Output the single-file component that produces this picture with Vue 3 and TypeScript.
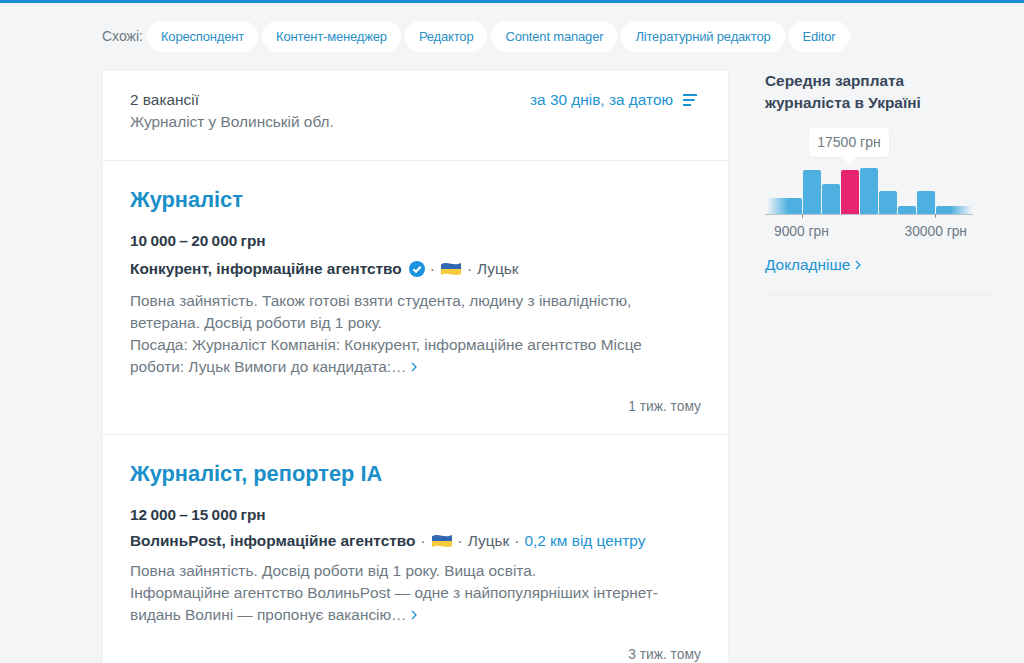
<script setup lang="ts">
interface Job {
  title: string
  salary: string
  company: string
  verified: boolean
  distance?: string
  lines: string[]
  age: string
}

const chips: string[] = ['Кореспондент', 'Контент-менеджер', 'Редактор', 'Content manager', 'Літературний редактор', 'Editor']

const jobs: Job[] = [
  {
    title: 'Журналіст',
    salary: '10 000 – 20 000 грн',
    company: 'Конкурент, інформаційне агентство',
    verified: true,
    lines: [
      'Повна зайнятість. Також готові взяти студента, людину з інвалідністю,',
      'ветерана. Досвід роботи від 1 року.',
      'Посада: Журналіст Компанія: Конкурент, інформаційне агентство Місце',
      'роботи: Луцьк Вимоги до кандидата:…'
    ],
    age: '1 тиж. тому'
  },
  {
    title: 'Журналіст, репортер ІА',
    salary: '12 000 – 15 000 грн',
    company: 'ВолиньPost, інформаційне агентство',
    verified: false,
    distance: '0,2 км від центру',
    lines: [
      'Повна зайнятість. Досвід роботи від 1 року. Вища освіта.',
      'Інформаційне агентство ВолиньPost — одне з найпопулярніших інтернет-',
      'видань Волині — пропонує вакансію…'
    ],
    age: '3 тиж. тому'
  }
]

const bars = [
  { w: 35, h: 16, kind: 'fade-left' },
  { w: 18, h: 44, kind: '' },
  { w: 18, h: 30, kind: '' },
  { w: 18, h: 44, kind: 'hot' },
  { w: 18, h: 46, kind: '' },
  { w: 18, h: 23, kind: '' },
  { w: 18, h: 8, kind: '' },
  { w: 18, h: 23, kind: '' },
  { w: 36, h: 8, kind: 'fade-right' }
]
</script>

<template>
  <div class="page">
    <div class="similar">
      <span class="similar-label">Схожі:</span>
      <a v-for="chip in chips" :key="chip" class="chip">{{ chip }}</a>
    </div>
    <div class="columns">
      <main class="card">
        <header class="head">
          <div>
            <div class="count">2 вакансії</div>
            <div class="query">Журналіст у Волинській обл.</div>
          </div>
          <a class="sort">
            за 30 днів, за датою
            <svg width="16" height="12" viewBox="0 0 16 12" class="sort-icon">
              <path d="M1 1h14M1 6h11.5M1 11h8" fill="none" stroke="#1d94d2" stroke-width="2" />
            </svg>
          </a>
        </header>
        <article v-for="job in jobs" :key="job.title" class="job">
          <h2 class="title">{{ job.title }}</h2>
          <div class="salary">{{ job.salary }}</div>
          <div class="meta" :class="{ tall: job.verified }">
            <b class="company">{{ job.company }}</b>
            <svg v-if="job.verified" class="check" width="16" height="16" viewBox="0 0 16 16">
              <circle cx="8" cy="8" r="8" fill="#1d94e2" />
              <path d="M4.4 8.2l2.6 2.5 4.6-5" fill="none" stroke="#fff" stroke-width="2.2" />
            </svg>
            <span class="dot">·</span>
            <svg class="flag" width="20" height="14" viewBox="0 0 20 14">
              <path d="M0 2.5C3 .5 6 1 10 1.8S17 2.5 20 1v6H0z" fill="#2f67b2" />
              <path d="M0 7h20v5c-3 1.4-6 1-10 .2S3 11.5 0 13z" fill="#f4cc3c" />
            </svg>
            <span class="dot">·</span>
            <span class="city">Луцьк</span>
            <template v-if="job.distance">
              <span class="dot">·</span>
              <a class="distance">{{ job.distance }}</a>
            </template>
          </div>
          <p class="desc">
            <span v-for="(line, i) in job.lines" :key="i" class="line">{{ line }}<svg v-if="i === job.lines.length - 1" class="more" width="6" height="10" viewBox="0 0 6 10"><path d="M1 1l4 4-4 4" fill="none" stroke="#1d94d2" stroke-width="1.3" /></svg></span>
          </p>
          <div class="age">{{ job.age }}</div>
        </article>
      </main>
      <aside class="side">
        <h3 class="side-title">Середня зарплата<br />журналіста в Україні</h3>
        <div class="chart">
          <div class="tip">17500 грн</div>
          <div class="bars">
            <div v-for="(bar, i) in bars" :key="i" class="bar" :class="bar.kind" :style="{ width: bar.w + 'px', height: bar.h + 'px' }"></div>
            <i class="tick tick-a"></i>
            <i class="tick tick-b"></i>
          </div>
          <div class="axis">
            <span class="tick-label">9000 грн</span>
            <span class="tick-label">30000 грн</span>
          </div>
        </div>
        <a class="details">Докладніше <svg width="6" height="10" viewBox="0 0 6 10"><path d="M1 1l4 4-4 4" fill="none" stroke="#1d94d2" stroke-width="1.3" /></svg></a>
        <div class="side-rule"></div>
      </aside>
    </div>
  </div>
</template>

<style>
html, body { margin: 0; background: #f3f5f7; overflow: hidden; }
</style>

<style scoped>
.page {
  height: 663px;
  box-sizing: border-box;
  overflow: hidden;
  border-top: 3px solid #1a8fd8;
  padding: 18px 0 0 102px;
  background: #f3f5f7;
  font-family: "Liberation Sans", Arial, sans-serif;
  color: #2d3b4a;
}
.similar { display: flex; align-items: center; gap: 4px; height: 31px; }
.similar-label { font-size: 14px; color: #6e7a84; line-height: 30px; position: relative; top: -1px; }
.chip {
  height: 31px;
  line-height: 31px;
  padding: 0 14px;
  border-radius: 16px;
  background: #fff;
  color: #2a8fc7;
  font-size: 13px;
  letter-spacing: -0.17px;
}
.columns { display: flex; margin-top: 18px; }
.card { width: 627px; flex: none; background: #fff; box-shadow: inset 0 0 0 1px #eef0f2; }
.head {
  height: 91px;
  box-sizing: border-box;
  padding: 19px 31px 0 28px;
  display: flex;
  justify-content: space-between;
  border-bottom: 1px solid #eceef0;
  font-size: 15.4px;
  line-height: 22px;
}
.count { color: #444f59; }
.query { color: #6e7a84; }
.sort { color: #1d94d2; display: flex; align-items: center; height: 22px; }
.sort-icon { margin-left: 9px; }
.job { padding: 22px 28px 0; height: 274px; box-sizing: border-box; border-bottom: 1px solid #eceef0; }
.title { margin: 0; font-size: 21.8px; line-height: 34px; font-weight: 700; color: #1a8fc9; }
.salary { margin-top: 13px; font-size: 15.4px; font-weight: 700; line-height: 22px; color: #2d3b4a; word-spacing: -1px; }
.meta { margin-top: 4px; display: flex; align-items: center; font-size: 15.4px; line-height: 22px; height: 22px; color: #55616c; }
.meta.tall { height: 26px; }
.company { color: #2d3b4a; }
.check { margin-left: 7px; }
.dot { margin: 0 5px; color: #55616c; }
.flag { margin: 0 1px; }
.distance { color: #1d94d2; }
.desc { margin: 8px 0 0; font-size: 15.4px; line-height: 22px; color: #6e7a84; }
.line { display: block; white-space: nowrap; }
.more { margin-left: 5px; }
.age { margin-top: 18px; text-align: right; font-size: 13.8px; line-height: 22px; color: #6e7a84; }
.side { margin-left: 36px; width: 227px; }
.side-title { margin: 0; font-size: 15.4px; line-height: 22px; font-weight: 700; color: #38475a; }
.chart { position: relative; margin-top: 54px; width: 208px; }
.tip {
  position: absolute;
  left: 44px;
  top: -40px;
  width: 80px;
  height: 29px;
  line-height: 29px;
  text-align: center;
  font-size: 14px;
  color: #6e7a84;
  background: #fff;
  border-radius: 4px;
  box-shadow: 0 0 2px #e3e6e9;
}
.tip::after {
  content: "";
  position: absolute;
  left: 33px;
  bottom: -7px;
  border: 7px solid transparent;
  border-bottom: 0;
  border-top-color: #fff;
}
.bars {
  position: relative;
  display: flex;
  align-items: flex-end;
  gap: 1px;
  height: 46px;
  padding-left: 2px;
  border-bottom: 1px solid #b9c0c6;
}
.tick { position: absolute; bottom: -4px; width: 1px; height: 4px; background: #8a949c; }
.tick-a { left: 37px; }
.tick-b { left: 170px; }
.bar { background: #4db0e0; border-radius: 2px 2px 0 0; flex: none; }
.hot { background: #e6246f; }
.fade-left { background: linear-gradient(90deg, #f3f5f7, #4db0e0 60%); }
.fade-right { background: linear-gradient(90deg, #4db0e0 40%, #f3f5f7); }
.axis { display: flex; justify-content: space-between; padding: 8px 6px 0 9px; font-size: 13.8px; line-height: 17px; color: #6e7a84; }
.details { display: block; margin-top: 14px; font-size: 15.4px; line-height: 22px; color: #1d94d2; }
.side-rule { margin-top: 18px; height: 1px; background: #eceef0; }
</style>
